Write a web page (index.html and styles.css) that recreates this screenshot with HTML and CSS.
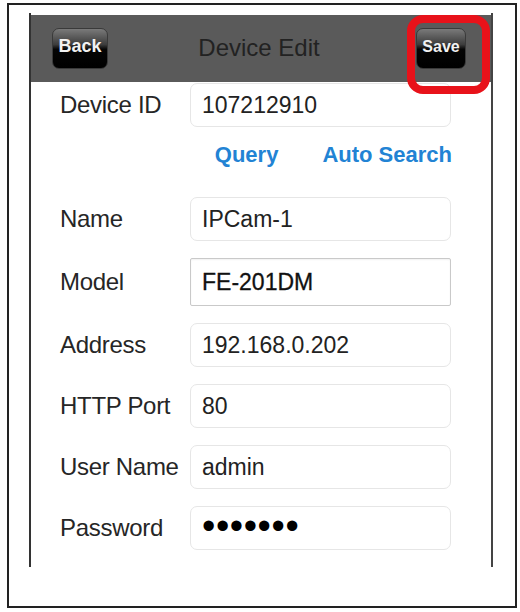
FILE: index.html
```html
<!DOCTYPE html>
<html lang="en">
<head>
    <meta charset="UTF-8">
    <meta name="viewport" content="width=device-width, initial-scale=1.0">
    <title>Device Edit</title>
    <link rel="stylesheet" href="styles.css">
</head>
<body>
    <div class="frame">
        <div class="phone">
            <div class="nav-bar">
                <div class="nav-left"><span class="nav-btn">Back</span></div>
                <div class="nav-title">Device Edit</div>
                <div class="nav-right"><span class="nav-btn save-btn">Save</span></div>
            </div>
            <div class="highlight"></div>

            <div class="form">
                <div class="row">
                    <span class="label">Device ID</span>
                    <div class="field">107212910</div>
                </div>
                <div class="links">
                    <span class="link">Query</span>
                    <span class="link">Auto Search</span>
                </div>
                <div class="fields">
                    <div class="row">
                        <span class="label">Name</span>
                        <div class="field">IPCam-1</div>
                    </div>
                    <div class="row row-model">
                        <span class="label">Model</span>
                        <div class="field field-model">FE-201DM</div>
                    </div>
                    <div class="row">
                        <span class="label">Address</span>
                        <div class="field">192.168.0.202</div>
                    </div>
                    <div class="row">
                        <span class="label">HTTP Port</span>
                        <div class="field">80</div>
                    </div>
                    <div class="row">
                        <span class="label">User Name</span>
                        <div class="field">admin</div>
                    </div>
                    <div class="row">
                        <span class="label">Password</span>
                        <div class="field field-password">&bull;&bull;&bull;&bull;&bull;&bull;&bull;</div>
                    </div>
                </div>
            </div>
        </div>
    </div>
</body>
</html>
```

FILE: styles.css
```css
body {
    margin: 0;
    background-color: #fff;
    font-family: 'Liberation Sans', Arial, Helvetica, sans-serif;
    color: #222;
}

.frame {
    margin: 3px 0 0 7px;
    width: 506px;
    height: 601px;
    border: 2px solid #222;
}

.phone {
    position: relative;
    margin: 8px 0 0 20px;
    width: 464px;
    height: 554px;
    padding-top: 2px;
    box-sizing: border-box;
    border-left: 2px solid #333;
    border-right: 2px solid #444;
}

/* top navigation bar */
.nav-bar {
    display: grid;
    grid-template-columns: 1fr auto 1fr;
    align-items: center;
    height: 67px;
    background-color: #5a5a5a;
}

.nav-left {
    padding-left: 21px;
}

.nav-right {
    display: flex;
    justify-content: flex-end;
    padding-right: 25px;
}

.nav-title {
    font-size: 24px;
    color: #222;
    margin-right: 4px;
    margin-top: -2px;
}

.nav-btn {
    display: inline-flex;
    align-items: center;
    justify-content: center;
    width: 56px;
    height: 41px;
    box-sizing: border-box;
    border-radius: 7px;
    border: 1px solid #3a3a3a;
    background: linear-gradient(#7a7a7a 0%, #3c3c3c 40%, #050505 52%, #000 100%);
    color: #f2f2f2;
    font-weight: bold;
    font-size: 18px;
    padding-bottom: 4px;
}

.save-btn {
    width: 50px;
    font-size: 16px;
}

.highlight {
    position: absolute;
    left: 376px;
    top: 2px;
    width: 83px;
    height: 79px;
    box-sizing: border-box;
    border: 8px solid #e8121a;
    border-radius: 16px;
}

/* form */
.form {
    padding: 1px 0 0 29px;
}

.row {
    display: flex;
    align-items: center;
}

.label {
    width: 130px;
    flex-shrink: 0;
    font-size: 24px;
    color: #262626;
    letter-spacing: -0.3px;
}

.field {
    width: 261px;
    height: 44px;
    box-sizing: border-box;
    display: flex;
    align-items: center;
    padding-left: 11px;
    border: 1px solid #e6e6e6;
    border-radius: 7px;
    font-size: 23px;
    color: #222;
}

.field-model {
    height: 48px;
    border: 1px solid #c9c9c9;
    border-radius: 2px;
    box-shadow: inset 0 1px 2px rgba(0, 0, 0, 0.06);
    color: #111;
    -webkit-text-stroke: 0.3px #111;
}

.field-password {
    font-size: 38px;
    color: #000;
    letter-spacing: 0.6px;
    padding-bottom: 4px;
}

.links {
    display: flex;
    justify-content: flex-end;
    align-items: center;
    gap: 44px;
    width: 392px;
    height: 56px;
    margin-bottom: 14px;
}

.link {
    font-size: 22px;
    font-weight: bold;
    color: #2283d4;
}

.fields {
    display: flex;
    flex-direction: column;
    gap: 17px;
}
```
